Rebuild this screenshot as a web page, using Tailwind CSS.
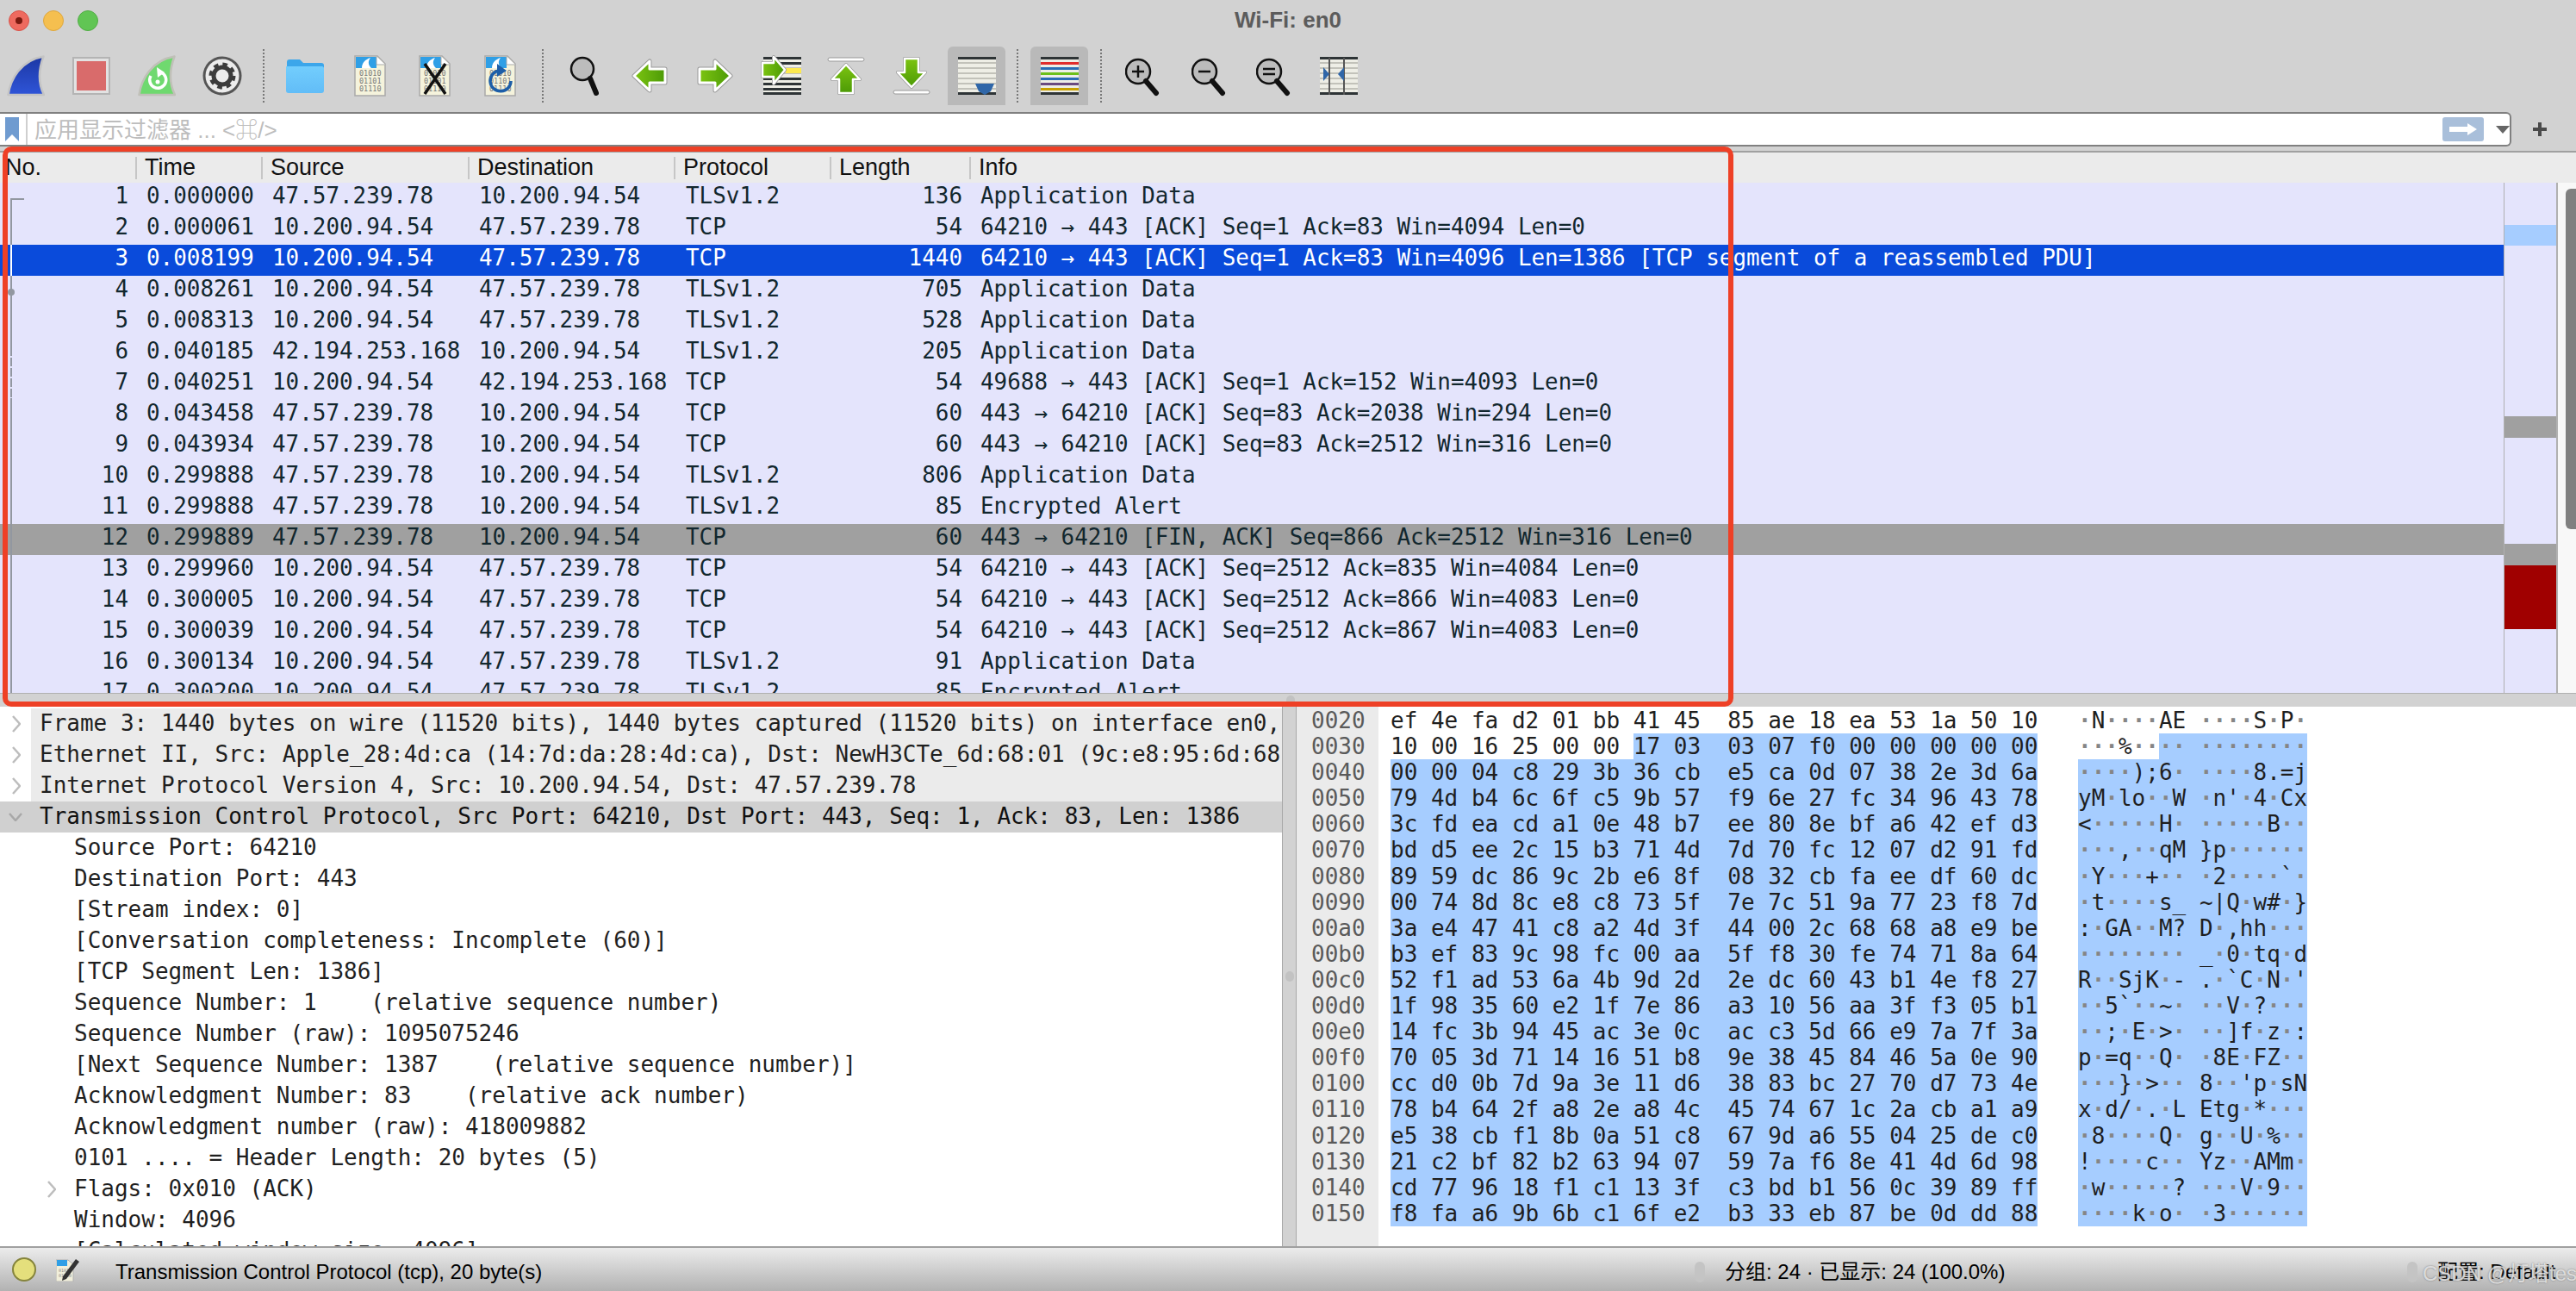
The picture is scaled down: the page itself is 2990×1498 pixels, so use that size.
<!DOCTYPE html>
<html lang="en">
<head>
  <meta charset="UTF-8" />
  <title>Wi-Fi: en0</title>
  <script src="https://cdn.jsdelivr.net/npm/@tailwindcss/browser@4"></script>
</head>
<body class="bg-[#d2d2d2]">
  <!-- shared svg bits -->
  <svg width="0" height="0" class="absolute">
    <defs>
      <linearGradient id="fin" x1="0" y1="0" x2="0" y2="1"><stop offset="0" stop-color="#1c37a4"/><stop offset="1" stop-color="#2f55d8"/></linearGradient>
      <linearGradient id="grn" x1="0" y1="0" x2="0" y2="1"><stop offset="0" stop-color="#7cc411"/><stop offset="1" stop-color="#4c9a06"/></linearGradient>
      <linearGradient id="grnh" x1="0" y1="0" x2="1" y2="0"><stop offset="0" stop-color="#7cc411"/><stop offset="1" stop-color="#4c9a06"/></linearGradient>
      <linearGradient id="fld" x1="0" y1="0" x2="0" y2="1"><stop offset="0" stop-color="#72cdfd"/><stop offset="1" stop-color="#62bdf7"/></linearGradient>
      <g id="doc">
        <path d="M1 1H27L36 10V47H1Z" fill="#f5f3dc" stroke="#a9a9a9" stroke-width="1.5"/>
        <path d="M2 2H26V15H2Z" fill="#2f9fe6"/>
        <path d="M26 1.5V11H36" fill="#fff" stroke="#a9a9a9"/>
        <path d="M9 15C9 9 13 5 19 3C16 7 16 11 20 15Z" fill="#fff"/>
        <text x="6" y="24" font-size="8.5" fill="#777" font-family="DejaVu Sans Mono">01010</text>
        <text x="6" y="33" font-size="8.5" fill="#777" font-family="DejaVu Sans Mono">01101</text>
        <text x="6" y="42" font-size="8.5" fill="#777" font-family="DejaVu Sans Mono">01110</text>
      </g>
      <g id="stripes">
        <rect x="0" y="2" width="44" height="44" fill="#eeeee6"/>
        <rect x="0" y="8" width="44" height="2" fill="#c2c2ba"/>
        <rect x="0" y="14" width="44" height="2" fill="#c2c2ba"/>
        <rect x="0" y="20" width="44" height="2" fill="#c2c2ba"/>
        <rect x="0" y="26" width="44" height="2" fill="#c2c2ba"/>
        <rect x="0" y="32" width="44" height="2" fill="#c2c2ba"/>
        <rect x="0" y="38" width="44" height="2" fill="#c2c2ba"/>
        <rect x="0" y="2" width="44" height="3" fill="#2e3436"/>
        <rect x="0" y="43" width="44" height="3" fill="#2e3436"/>
      </g>
    </defs>
  </svg>

  <div class="relative w-[2990px] h-[1498px] overflow-hidden flex flex-col bg-[#d2d2d2] font-['Liberation_Sans','Noto_Sans_CJK_SC',sans-serif]">

    <!-- title bar -->
    <div class="h-[50px] shrink-0 flex">
      <div class="w-[114px] pl-[10px] pt-[12px] flex gap-[16px]">
        <div class="w-[24px] h-[24px] rounded-full bg-[#ee6a5f] border border-[#d9534a] flex items-center justify-center"><div class="w-[8px] h-[8px] rounded-full bg-[#7a1a10]"></div></div>
        <div class="w-[24px] h-[24px] rounded-full bg-[#f5bf4f] border border-[#dea73e]"></div>
        <div class="w-[24px] h-[24px] rounded-full bg-[#61c554] border border-[#52ad46]"></div>
      </div>
      <div class="flex-1 pr-[114px] text-center text-[26px] leading-[46px] font-bold text-[#5c5c5c]">Wi-Fi: en0</div>
    </div>

    <!-- toolbar -->
    <div class="h-[80px] shrink-0 flex items-center pb-[4px]">
      <svg class="shrink-0 ml-[8px]" width="44" height="48" viewBox="0 0 44 48"><path d="M1.5 46C4 28 16 6 42.5 1.5C37 16 36 32 43 46Z" fill="url(#fin)" stroke="#c4c4c4" stroke-width="2.5" stroke-linejoin="round"/></svg>
      <svg class="shrink-0 ml-[32px]" width="44" height="48" viewBox="0 0 44 48"><rect x="1" y="3" width="42" height="42" fill="#e2e2e2" stroke="#b4b4b4" stroke-width="2"/><rect x="5" y="7" width="34" height="34" fill="#d96b6b"/></svg>
      <svg class="shrink-0 ml-[32px]" width="44" height="48" viewBox="0 0 44 48"><path d="M1.5 46C4 28 16 6 42.5 1.5C37 16 36 32 43 46Z" fill="#6fd96f" stroke="#c0c0b8" stroke-width="2.5" stroke-linejoin="round"/><path d="M27 20A9.5 9.5 0 1 1 15 24" fill="none" stroke="#fff" stroke-width="3.5"/><path d="M22 14L31 20L23 26Z" fill="#fff"/><circle cx="23" cy="31" r="2.5" fill="#fff"/></svg>
      <svg class="shrink-0 ml-[31px]" width="46" height="48" viewBox="0 0 46 48"><circle cx="23" cy="24" r="22.5" fill="#555"/><circle cx="23" cy="24" r="19.5" fill="#ececec"/><circle cx="23" cy="24" r="10" fill="none" stroke="#3c3c3c" stroke-width="5"/><circle cx="23" cy="24" r="13.5" fill="none" stroke="#3c3c3c" stroke-width="4" stroke-dasharray="5.6 5"/></svg>
      <div class="shrink-0 ml-[24px] w-[2px] h-[62px] border-l-2 border-dotted border-[#777]"></div>
      <svg class="shrink-0 ml-[25px]" width="44" height="48" viewBox="0 0 44 48"><path d="M1 8C1 6 2 5 4 5H16L20 9H41C43 9 44 10 44 12V20H1Z" fill="#3ca6ea"/><path d="M0 13H42C43 13 44 14 44 15V41C44 43 43 44 41 44H3C1 44 0 43 0 41Z" fill="url(#fld)"/></svg>
      <svg class="shrink-0 ml-[35px]" width="37" height="48" viewBox="0 0 37 48"><use href="#doc"/></svg>
      <svg class="shrink-0 ml-[38px]" width="38" height="48" viewBox="0 0 38 48"><use href="#doc"/><path d="M7 10L31 45M31 10L7 45" stroke="#111" stroke-width="3.5" fill="none"/></svg>
      <svg class="shrink-0 ml-[38px]" width="38" height="48" viewBox="0 0 38 48"><use href="#doc"/><path d="M31 30A12 12 0 1 1 17 18" fill="none" stroke="#1d5ea8" stroke-width="3.5"/><path d="M15 10L26 18L15 25Z" fill="#1d5ea8"/></svg>
      <div class="shrink-0 ml-[29px] w-[2px] h-[62px] border-l-2 border-dotted border-[#777]"></div>
      <svg class="shrink-0 ml-[30px]" width="34" height="48" viewBox="0 0 34 48"><circle cx="15" cy="16" r="13" fill="#bcbcbc" stroke="#111" stroke-width="2.5"/><path d="M24 27L31 44" stroke="#111" stroke-width="6" stroke-linecap="round"/></svg>
      <svg class="shrink-0 ml-[38px]" width="42" height="48" viewBox="0 0 42 48"><path d="M3 24L21 7V16H39V32H21V41Z" fill="#999" stroke="#999" stroke-width="5" stroke-linejoin="round"/><path d="M3 24L21 7V16H39V32H21V41Z" fill="url(#grnh)" stroke="#fff" stroke-width="3" stroke-linejoin="round"/></svg>
      <svg class="shrink-0 ml-[34px]" width="42" height="48" viewBox="0 0 42 48"><path d="M39 24L21 7V16H3V32H21V41Z" fill="#999" stroke="#999" stroke-width="5" stroke-linejoin="round"/><path d="M39 24L21 7V16H3V32H21V41Z" fill="url(#grnh)" stroke="#fff" stroke-width="3" stroke-linejoin="round"/></svg>
      <svg class="shrink-0 ml-[32px]" width="47" height="48" viewBox="0 0 47 48"><g transform="translate(3 0)"><use href="#stripes"/><rect x="0" y="8" width="44" height="3" fill="#2e3436"/><rect x="0" y="26" width="44" height="3" fill="#2e3436"/><rect x="0" y="32" width="44" height="3" fill="#2e3436"/><rect x="0" y="38" width="44" height="3" fill="#2e3436"/><rect x="26" y="15" width="18" height="6" fill="#fce94f"/></g><path d="M28 17L15 2V9H2V25H15V33Z" fill="#999" stroke="#999" stroke-width="4" stroke-linejoin="round"/><path d="M28 17L15 2V9H2V25H15V33Z" fill="url(#grnh)" stroke="#fff" stroke-width="2.5" stroke-linejoin="round"/></svg>
      <svg class="shrink-0 ml-[30px]" width="44" height="48" viewBox="0 0 44 48"><rect x="1" y="3" width="42" height="4" rx="2" fill="#fff" stroke="#999"/><path d="M22 11L38 28H30V44H14V28H6Z" fill="#999" stroke="#999" stroke-width="4" stroke-linejoin="round"/><path d="M22 11L38 28H30V44H14V28H6Z" fill="url(#grn)" stroke="#fff" stroke-width="2.5" stroke-linejoin="round"/></svg>
      <svg class="shrink-0 ml-[32px]" width="44" height="48" viewBox="0 0 44 48"><path d="M22 37L38 20H30V4H14V20H6Z" fill="#999" stroke="#999" stroke-width="4" stroke-linejoin="round"/><path d="M22 37L38 20H30V4H14V20H6Z" fill="url(#grn)" stroke="#fff" stroke-width="2.5" stroke-linejoin="round"/><rect x="1" y="41" width="42" height="4" rx="2" fill="#fff" stroke="#999"/></svg>
      <div class="shrink-0 ml-[20px] w-[67px] h-[68px] rounded-t-[6px] bg-[#b9b9b9] flex items-center justify-center">
        <svg width="44" height="48" viewBox="0 0 44 48"><use href="#stripes"/><path d="M20 33H42L38 42L31 46L24 42Z" fill="#2f66a8"/></svg>
      </div>
      <div class="shrink-0 ml-[13px] w-[2px] h-[62px] border-l-2 border-dotted border-[#777]"></div>
      <div class="shrink-0 ml-[14px] w-[67px] h-[68px] rounded-t-[6px] bg-[#b9b9b9] flex items-center justify-center">
        <svg width="44" height="48" viewBox="0 0 44 48"><rect y="2" width="44" height="44" fill="#eeeee6"/><rect y="2" width="44" height="3" fill="#2e3436"/><rect y="8" width="44" height="3" fill="#e02d2d"/><rect y="14" width="44" height="3" fill="#2a6db5"/><rect y="20" width="44" height="3" fill="#6cc01a"/><rect y="26" width="44" height="3" fill="#2a6db5"/><rect y="32" width="44" height="3" fill="#6a4a80"/><rect y="38" width="44" height="3" fill="#c9a000"/><rect y="43" width="44" height="3" fill="#2e3436"/></svg>
      </div>
      <div class="shrink-0 ml-[14px] w-[2px] h-[62px] border-l-2 border-dotted border-[#777]"></div>
      <svg class="shrink-0 ml-[27px]" width="40" height="48" viewBox="0 0 40 48"><circle cx="15" cy="19" r="14" fill="#bcbcbc" stroke="#111" stroke-width="2.5"/><path d="M24 30L36 44" stroke="#111" stroke-width="6" stroke-linecap="round"/><path d="M8 19H22M15 12V26" stroke="#111" stroke-width="2.5"/></svg>
      <svg class="shrink-0 ml-[37px]" width="40" height="48" viewBox="0 0 40 48"><circle cx="15" cy="19" r="14" fill="#bcbcbc" stroke="#111" stroke-width="2.5"/><path d="M24 30L36 44" stroke="#111" stroke-width="6" stroke-linecap="round"/><path d="M8 19H22" stroke="#111" stroke-width="2.5"/></svg>
      <svg class="shrink-0 ml-[35px]" width="40" height="48" viewBox="0 0 40 48"><circle cx="15" cy="19" r="14" fill="#bcbcbc" stroke="#111" stroke-width="2.5"/><path d="M24 30L36 44" stroke="#111" stroke-width="6" stroke-linecap="round"/><path d="M8 16H22M8 22H22" stroke="#111" stroke-width="2.5"/></svg>
      <svg class="shrink-0 ml-[34px]" width="44" height="48" viewBox="0 0 44 48"><use href="#stripes"/><path d="M11 3V46M28 3V46" stroke="#555" stroke-width="2"/><path d="M4 14L11 22L4 30Z" fill="#2f66a8"/><path d="M28 14L21 22L28 30Z" fill="#2f66a8"/></svg>
    </div>

    <!-- display filter -->
    <div class="h-[47px] shrink-0 border-b-2 border-[#a0a0a0]">
      <div class="flex items-center">
        <div class="flex items-center w-[2915px] h-[40px] bg-white border-y-2 border-r-2 border-[#808080] rounded-r-[6px]">
          <div class="w-[32px] h-full border-r-2 border-[#cfcfcf] flex items-center pl-[6px]">
            <svg width="16" height="28" viewBox="0 0 16 28"><path d="M0 0H16V28L8 20L0 28Z" fill="#6f9bd0"/></svg>
          </div>
          <div class="flex-1 pl-[8px] pt-[2px] text-[26px] leading-[34px] text-[#bdbdbd] whitespace-pre">应用显示过滤器 ... &lt;⌘/&gt;</div>
          <div class="w-[48px] h-[28px] rounded-[3px] bg-[#a9bfda] flex items-center justify-center">
            <svg width="34" height="16" viewBox="0 0 34 16"><path d="M1 5H22V1L33 8L22 15V11H1Z" fill="#fff"/></svg>
          </div>
          <svg class="ml-[14px]" width="16" height="9" viewBox="0 0 16 9"><path d="M0 0H16L8 9Z" fill="#666"/></svg>
        </div>
        <svg class="ml-[25px]" width="16" height="16" viewBox="0 0 16 16"><path d="M6 0H10V6H16V10H10V16H6V10H0V6H6Z" fill="#4a4a4a"/></svg>
      </div>
    </div>

    <!-- packet list header -->
    <div class="h-[35px] shrink-0 bg-[#ebebeb] flex items-center text-[27px] leading-[35px] text-[#111]">
      <div class="w-[159px] h-[26px] pl-[6px] flex items-center border-r-2 border-[#c6c6c6]">No.</div>
      <div class="w-[146px] h-[26px] pl-[9px] flex items-center border-r-2 border-[#c6c6c6]">Time</div>
      <div class="w-[240px] h-[26px] pl-[9px] flex items-center border-r-2 border-[#c6c6c6]">Source</div>
      <div class="w-[239px] h-[26px] pl-[9px] flex items-center border-r-2 border-[#c6c6c6]">Destination</div>
      <div class="w-[181px] h-[26px] pl-[9px] flex items-center border-r-2 border-[#c6c6c6]">Protocol</div>
      <div class="w-[162px] h-[26px] pl-[9px] flex items-center border-r-2 border-[#c6c6c6]">Length</div>
      <div class="pl-[9px]">Info</div>
    </div>

    <!-- packet list -->
    <div class="relative h-[592px] shrink-0 flex">
      <div id="packets" class="w-[2906px] h-full overflow-hidden bg-[#e4e4fc] font-['DejaVu_Sans_Mono',monospace] text-[25.92px] leading-[31px]"></div>
      <svg class="absolute left-0 top-0" width="30" height="592" viewBox="0 0 30 592">
        <path d="M28 19H13V72M13 108V191" fill="none" stroke="#9297a0" stroke-width="2"/>
        <path d="M13 72V108" stroke="#fff" stroke-width="2"/>
        <circle cx="13" cy="127" r="4" fill="#9297a0"/>
        <path d="M13 191V250" stroke="#9297a0" stroke-width="2" stroke-dasharray="10 2"/>
        <path d="M13 250V592" stroke="#9297a0" stroke-width="2"/>
      </svg>
      <!-- minimap -->
      <div class="w-[63px] h-full border-l border-r-2 border-[#b0b0b0] bg-[#e4e4fc] flex flex-col">
        <div class="h-[49px]"></div>
        <div class="h-[24px] bg-[#a6cdff]"></div>
        <div class="h-[198px]"></div>
        <div class="h-[25px] bg-[#a0a0a0]"></div>
        <div class="h-[123px]"></div>
        <div class="h-[25px] bg-[#a0a0a0]"></div>
        <div class="h-[74px] bg-[#a00000]"></div>
      </div>
      <div class="flex-1 bg-[#f8f8f8] pt-[7px] pl-[9px]">
        <div class="h-[395px] rounded-l-[6px] bg-[#808080]"></div>
      </div>
    </div>

    <!-- splitter -->
    <div class="h-[16px] shrink-0 border-t border-[#b0b0b0] bg-[#d2d2d2] flex justify-center pl-[5px] pt-[2px]">
      <div class="w-[10px] h-[12px] rounded-full bg-[#c2c2c2]"></div>
    </div>

    <!-- details and bytes -->
    <div class="h-[628px] shrink-0 flex bg-white border-b-2 border-[#a0a0a0] font-['DejaVu_Sans_Mono',monospace] text-[26px] text-[#1f1f1f]">
      <div id="details" class="w-[1488px] h-full overflow-hidden pt-[2px] leading-[34px]"></div>
      <div class="w-[17px] h-full border-x border-[#a8a8a8] bg-[#d2d2d2] flex items-center justify-center">
        <div class="w-[10px] h-[12px] rounded-full bg-[#c2c2c2]"></div>
      </div>
      <div class="flex-1 h-full flex flex-col overflow-hidden">
        <div class="w-[95px] h-[1px] bg-[#ebebeb]"></div>
        <div id="bytes" class="leading-[30px]"></div>
        <div class="w-[95px] flex-1 bg-[#ebebeb]"></div>
      </div>
    </div>

    <!-- status bar -->
    <div class="h-[50px] shrink-0 flex items-center bg-linear-to-b from-[#ececec] to-[#b2b2b2] text-[24px] text-black">
      <div class="shrink-0 ml-[14px] w-[28px] h-[28px] rounded-full bg-[#e4df7c] border-2 border-[#85843c]"></div>
      <svg class="shrink-0 ml-[23px]" width="27" height="28" viewBox="0 0 27 28">
        <path d="M0 3H14L20 8V28H0Z" fill="#f1efdb" stroke="#b0b0b0"/><path d="M1 3H13V10H1Z" fill="#2f9fe6"/>
        <text x="3" y="17" font-size="5" fill="#888" font-family="DejaVu Sans Mono">01010</text>
        <text x="3" y="23" font-size="5" fill="#888" font-family="DejaVu Sans Mono">01110</text>
        <path d="M8 22L23 2L27 5L12 25L7 27Z" fill="#333"/>
      </svg>
      <div class="shrink-0 ml-[42px] w-[1833px] pt-[5px] whitespace-pre">Transmission Control Protocol (tcp), 20 byte(s)</div>
      <div class="shrink-0 w-[12px] h-[24px] mt-[5px] rounded-full bg-[#c4c4c4]"></div>
      <div class="shrink-0 ml-[23px] w-[792px] pt-[5px] whitespace-pre">分组: 24 · 已显示: 24 (100.0%)</div>
      <div class="shrink-0 w-[12px] h-[24px] mt-[5px] rounded-full bg-[#c4c4c4]"></div>
      <div class="shrink-0 ml-[23px] pt-[5px] whitespace-pre">配置: Default</div>
    </div>

    <!-- watermark -->
    <div class="absolute left-[2812px] top-[1463px] text-[24px] leading-[30px] text-white/70 whitespace-pre [text-shadow:0_0_2px_#777]">CSDN @灯塔tester</div>

    <!-- red annotation box -->
    <div class="absolute left-[3px] top-[170px] w-[2009px] h-[650px] border-[6px] border-[#ee4026] rounded-[10px] pointer-events-none"></div>
  </div>

  <script>
    (function() {
      const ACK = '64210 → 443 [ACK] ';
      const A = '47.57.239.78', B = '10.200.94.54', C = '42.194.253.168';
      const packets = [
        ['1', '0.000000', A, B, 'TLSv1.2', '136', 'Application Data'],
        ['2', '0.000061', B, A, 'TCP', '54', ACK + 'Seq=1 Ack=83 Win=4094 Len=0'],
        ['3', '0.008199', B, A, 'TCP', '1440', ACK + 'Seq=1 Ack=83 Win=4096 Len=1386 [TCP segment of a reassembled PDU]'],
        ['4', '0.008261', B, A, 'TLSv1.2', '705', 'Application Data'],
        ['5', '0.008313', B, A, 'TLSv1.2', '528', 'Application Data'],
        ['6', '0.040185', C, B, 'TLSv1.2', '205', 'Application Data'],
        ['7', '0.040251', B, C, 'TCP', '54', '49688 → 443 [ACK] Seq=1 Ack=152 Win=4093 Len=0'],
        ['8', '0.043458', A, B, 'TCP', '60', '443 → 64210 [ACK] Seq=83 Ack=2038 Win=294 Len=0'],
        ['9', '0.043934', A, B, 'TCP', '60', '443 → 64210 [ACK] Seq=83 Ack=2512 Win=316 Len=0'],
        ['10', '0.299888', A, B, 'TLSv1.2', '806', 'Application Data'],
        ['11', '0.299888', A, B, 'TLSv1.2', '85', 'Encrypted Alert'],
        ['12', '0.299889', A, B, 'TCP', '60', '443 → 64210 [FIN, ACK] Seq=866 Ack=2512 Win=316 Len=0'],
        ['13', '0.299960', B, A, 'TCP', '54', ACK + 'Seq=2512 Ack=835 Win=4084 Len=0'],
        ['14', '0.300005', B, A, 'TCP', '54', ACK + 'Seq=2512 Ack=866 Win=4083 Len=0'],
        ['15', '0.300039', B, A, 'TCP', '54', ACK + 'Seq=2512 Ack=867 Win=4083 Len=0'],
        ['16', '0.300134', B, A, 'TLSv1.2', '91', 'Application Data'],
        ['17', '0.300200', B, A, 'TLSv1.2', '85', 'Encrypted Alert']
      ];

      document.getElementById('packets').innerHTML = packets.map(p => {
        let color = 'bg-[#e4e4fc] text-[#12272e]';
        if (p[0] === '3') color = 'bg-[#0a4bdb] text-white';
        if (p[0] === '12') color = 'bg-[#a0a0a0] text-[#12272e]';
        return `<div class="flex h-[36px] whitespace-pre ${color}">
          <div class="w-[159px] pr-[10px] text-right">${p[0]}</div>
          <div class="w-[146px] pl-[11px]">${p[1]}</div>
          <div class="w-[240px] pl-[11px]">${p[2]}</div>
          <div class="w-[239px] pl-[11px]">${p[3]}</div>
          <div class="w-[181px] pl-[12px]">${p[4]}</div>
          <div class="w-[162px] pr-[10px] text-right">${p[5]}</div>
          <div class="pl-[11px]">${p[6]}</div>
        </div>`;
      }).join('');

      const closed = '<svg width="10" height="20" viewBox="0 0 10 20"><path d="M1 1L9 10L1 19" fill="none" stroke="#bdbdbd" stroke-width="2.5"/></svg>';
      const open = '<svg width="16" height="10" viewBox="0 0 16 10"><path d="M1 1L8 9L15 1" fill="none" stroke="#a8a8a8" stroke-width="2.5"/></svg>';

      const top = [
        'Frame 3: 1440 bytes on wire (11520 bits), 1440 bytes captured (11520 bits) on interface en0, id 0',
        'Ethernet II, Src: Apple_28:4d:ca (14:7d:da:28:4d:ca), Dst: NewH3CTe_6d:68:01 (9c:e8:95:6d:68:01)',
        'Internet Protocol Version 4, Src: 10.200.94.54, Dst: 47.57.239.78'
      ];
      const fields = [
        'Source Port: 64210',
        'Destination Port: 443',
        '[Stream index: 0]',
        '[Conversation completeness: Incomplete (60)]',
        '[TCP Segment Len: 1386]',
        'Sequence Number: 1    (relative sequence number)',
        'Sequence Number (raw): 1095075246',
        '[Next Sequence Number: 1387    (relative sequence number)]',
        'Acknowledgment Number: 83    (relative ack number)',
        'Acknowledgment number (raw): 418009882',
        '0101 .... = Header Length: 20 bytes (5)',
        'Flags: 0x010 (ACK)',
        'Window: 4096',
        '[Calculated window size: 4096]'
      ];

      let html = top.map(t => `<div class="flex h-[36px] whitespace-pre">
        <div class="w-[36px] shrink-0 flex items-center pl-[14px]">${closed}</div>
        <div class="flex-1 bg-[#ebebeb] pl-[10px] overflow-hidden">${t}</div>
      </div>`).join('');
      html += `<div class="flex h-[36px] whitespace-pre bg-[#d0d0d0]">
        <div class="w-[36px] shrink-0 flex items-center pl-[10px]">${open}</div>
        <div class="flex-1 pl-[10px] overflow-hidden text-[#111]">Transmission Control Protocol, Src Port: 64210, Dst Port: 443, Seq: 1, Ack: 83, Len: 1386</div>
      </div>`;
      html += fields.map(f => `<div class="flex h-[36px] whitespace-pre">
        <div class="w-[76px] shrink-0 flex items-center justify-end pr-[11px]">${f.startsWith('Flags') ? closed : ''}</div>
        <div class="flex-1 pl-[10px]">${f}</div>
      </div>`).join('');
      document.getElementById('details').innerHTML = html;

      const hex = [
        'ef 4e fa d2 01 bb 41 45 85 ae 18 ea 53 1a 50 10',
        '10 00 16 25 00 00 17 03 03 07 f0 00 00 00 00 00',
        '00 00 04 c8 29 3b 36 cb e5 ca 0d 07 38 2e 3d 6a',
        '79 4d b4 6c 6f c5 9b 57 f9 6e 27 fc 34 96 43 78',
        '3c fd ea cd a1 0e 48 b7 ee 80 8e bf a6 42 ef d3',
        'bd d5 ee 2c 15 b3 71 4d 7d 70 fc 12 07 d2 91 fd',
        '89 59 dc 86 9c 2b e6 8f 08 32 cb fa ee df 60 dc',
        '00 74 8d 8c e8 c8 73 5f 7e 7c 51 9a 77 23 f8 7d',
        '3a e4 47 41 c8 a2 4d 3f 44 00 2c 68 68 a8 e9 be',
        'b3 ef 83 9c 98 fc 00 aa 5f f8 30 fe 74 71 8a 64',
        '52 f1 ad 53 6a 4b 9d 2d 2e dc 60 43 b1 4e f8 27',
        '1f 98 35 60 e2 1f 7e 86 a3 10 56 aa 3f f3 05 b1',
        '14 fc 3b 94 45 ac 3e 0c ac c3 5d 66 e9 7a 7f 3a',
        '70 05 3d 71 14 16 51 b8 9e 38 45 84 46 5a 0e 90',
        'cc d0 0b 7d 9a 3e 11 d6 38 83 bc 27 70 d7 73 4e',
        '78 b4 64 2f a8 2e a8 4c 45 74 67 1c 2a cb a1 a9',
        'e5 38 cb f1 8b 0a 51 c8 67 9d a6 55 04 25 de c0',
        '21 c2 bf 82 b2 63 94 07 59 7a f6 8e 41 4d 6d 98',
        'cd 77 96 18 f1 c1 13 3f c3 bd b1 56 0c 39 89 ff',
        'f8 fa a6 9b 6b c1 6f e2 b3 33 eb 87 be 0d dd 88'
      ];

      function asciiCell(b) {
        const n = parseInt(b, 16);
        if (n < 32 || n > 126) return '<span class="font-bold text-[#858585]">·</span>';
        const c = String.fromCharCode(n);
        return c === '<' ? '&lt;' : c === '>' ? '&gt;' : c === '&' ? '&amp;' : c;
      }
      function hexText(list) {
        // extra space between the two groups of 8
        return list.map(x => x.i === 8 ? ' ' + x.b : x.b).join(' ');
      }
      function asciiText(list) {
        return list.map(x => (x.i === 8 ? ' ' : '') + asciiCell(x.b)).join('');
      }

      document.getElementById('bytes').innerHTML = hex.map((line, r) => {
        const items = line.split(' ').map((b, i) => ({ b, i }));
        const cut = r === 0 ? 16 : r === 1 ? 6 : 0;   // bytes before the selection starts
        const off = (0x20 + r * 16).toString(16).padStart(4, '0');
        const before = items.slice(0, cut), sel = items.slice(cut);
        const hexPlain = before.length ? `<span>${hexText(before)}${sel.length ? ' ' : ''}</span>` : '';
        const hexSel = sel.length ? `<span class="bg-[#a6cdff]">${hexText(sel)}</span>` : '';
        const ascPlain = before.length ? `<span>${asciiText(before)}</span>` : '';
        const ascSel = sel.length ? `<span class="bg-[#a6cdff]">${asciiText(sel)}</span>` : '';
        return `<div class="flex h-[30.1px] whitespace-pre">
          <div class="w-[95px] shrink-0 bg-[#ebebeb] pl-[17px] text-[#5a5a5a]">${off}</div>
          <div class="ml-[14px] w-[798px] shrink-0 flex">${hexPlain}${hexSel}</div>
          <div class="flex">${ascPlain}${ascSel}</div>
        </div>`;
      }).join('');
    })();
  </script>
</body>
</html>
